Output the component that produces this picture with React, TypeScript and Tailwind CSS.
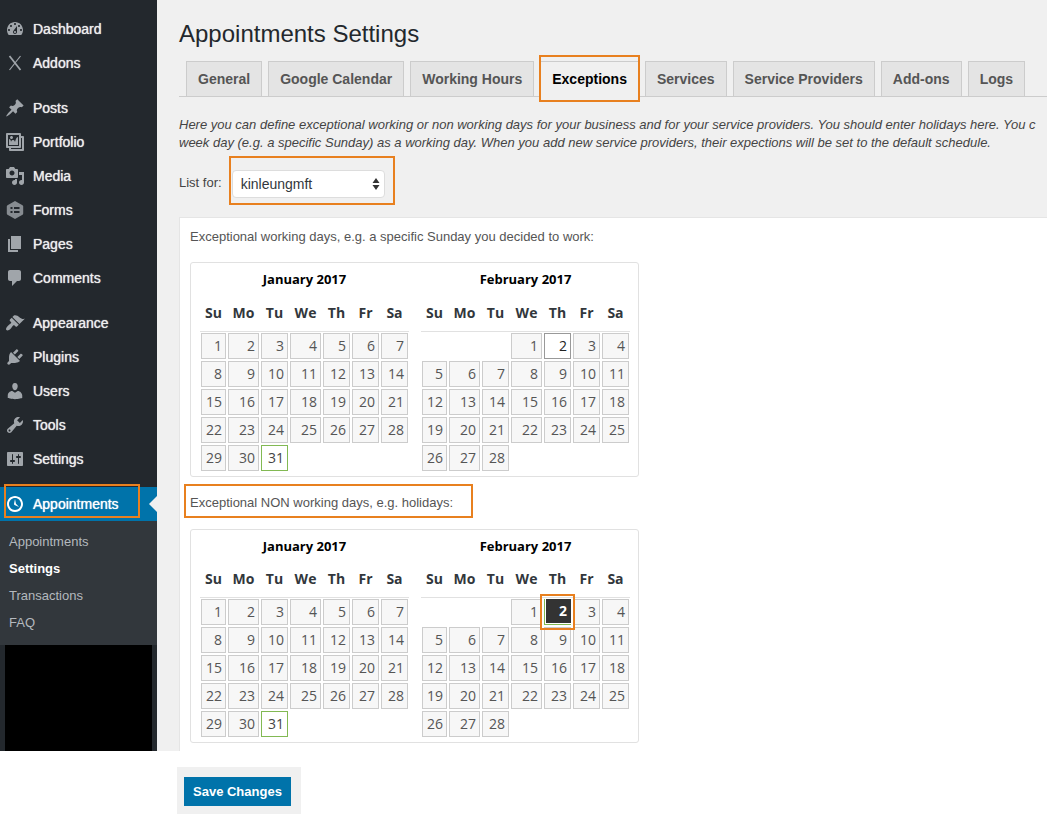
import { useState } from "react";
import clsx from "clsx";

type MenuItem = { label: string; icon: React.ReactNode };

function Icon({ d }: { d: string }) {
  return (
    <svg viewBox="0 0 20 20" className="size-5 shrink-0" fill="currentColor" aria-hidden="true">
      <path d={d} />
    </svg>
  );
}

const menuGroups: MenuItem[][] = [
  [
    {
      label: "Dashboard",
      icon: (
        <Icon d="M3.76 16h12.48c1.1-1.37 1.76-3.11 1.76-5 0-4.42-3.58-8-8-8s-8 3.58-8 8c0 1.89.66 3.63 1.76 5zM10 4c.55 0 1 .45 1 1s-.45 1-1 1-1-.45-1-1 .45-1 1-1zM6 6c.55 0 1 .45 1 1s-.45 1-1 1-1-.45-1-1 .45-1 1-1zm8 0c.55 0 1 .45 1 1s-.45 1-1 1-1-.45-1-1 .45-1 1-1zm-5.37 5.55L12 7v6c0 1.1-.9 2-2 2s-2-.9-2-2c0-.57.24-1.08.63-1.45zM4 10c.55 0 1 .45 1 1s-.45 1-1 1-1-.45-1-1 .45-1 1-1zm12 0c.55 0 1 .45 1 1s-.45 1-1 1-1-.45-1-1 .45-1 1-1zm-5 3c0-.55-.45-1-1-1s-1 .45-1 1 .45 1 1 1 1-.45 1-1z" />
      ),
    },
    {
      label: "Addons",
      icon: (
        <svg viewBox="0 0 20 20" className="size-5 shrink-0" fill="none" stroke="currentColor" aria-hidden="true">
          <path d="M4.500 3l11 14" strokeWidth="1.800" />
          <path d="M15.500 3L4.500 17" strokeWidth="1.200" />
        </svg>
      ),
    },
  ],
  [
    {
      label: "Posts",
      icon: (
        <Icon d="M10.44 3.02l1.82-1.82 6.36 6.35-1.83 1.82c-1.05-.68-2.48-.57-3.41.36l-.75.75c-.92.93-1.04 2.35-.35 3.41l-1.83 1.82-2.41-2.41-2.8 2.79c-.42.42-3.38 2.71-3.8 2.29s1.86-3.39 2.28-3.81l2.79-2.79L4.1 9.36l1.83-1.82c1.05.69 2.48.57 3.4-.36l.75-.75c.93-.92 1.05-2.35.36-3.41z" />
      ),
    },
    {
      label: "Portfolio",
      icon: (
        <Icon d="M16 4h1.96c.57 0 1.04.47 1.04 1.04v12.92c0 .57-.47 1.04-1.04 1.04H5.04C4.47 19 4 18.53 4 17.96V16H2.04C1.47 16 1 15.53 1 14.96V2.04C1 1.47 1.47 1 2.04 1h12.92c.57 0 1.04.47 1.04 1.04V4zM3 14h11V3H3v11zm5-8.5C8 4.67 7.33 4 6.5 4S5 4.67 5 5.5 5.67 7 6.500 7 8 6.33 8 5.5zm2 4.500s1-5 3-5v8H4V7c2 0 2 3 2 3s.33-2 2-2 2 2 2 2zm7 7V6h-1v8.960c0 .57-.47 1.04-1.04 1.04H6v1h11z" />
      ),
    },
    {
      label: "Media",
      icon: (
        <Icon d="M13 11V4c0-.55-.45-1-1-1h-1.670L9 1H5L3.67 3H2c-.55 0-1 .45-1 1v7c0 .55.45 1 1 1h10c.55 0 1-.45 1-1zM7 4.500c1.38 0 2.5 1.12 2.5 2.5S8.38 9.5 7 9.5 4.5 8.38 4.500 7 5.62 4.500 7 4.500zM14 6h5v10.5c0 1.38-1.12 2.5-2.5 2.5S14 17.88 14 16.5s1.12-2.5 2.5-2.5c.17 0 .34.02.5.05V9h-3V6zm-4 8.050V13h2v3.500c0 1.38-1.12 2.5-2.5 2.5S7 17.88 7 16.5 8.12 14 9.500 14c.17 0 .34.02.5.05z" />
      ),
    },
    {
      label: "Forms",
      icon: (
        <svg viewBox="0 0 20 20" className="size-5 shrink-0 opacity-80" aria-hidden="true">
          <path
            d="M10 1l7.500 4.200q.7.4.7 1.200v7.200q0 .8-.7 1.200L10 19l-7.500-4.200q-.7-.4-.7-1.200V6.400q0-.8.7-1.200z"
            fill="currentColor"
          />
          <path
            d="M5.500 7h2v2h-2zM9 7h5.500v2H9zM5.500 11h2v2h-2zM9 11h5.500v2H9z"
            fill="#23282d"
          />
        </svg>
      ),
    },
    { label: "Pages", icon: <Icon d="M6 15V2h10v13H6zm-1 1h8v2H3V5h2v11z" /> },
    {
      label: "Comments",
      icon: <Icon d="M5 2h9c1.1 0 2 .9 2 2v7c0 1.1-.9 2-2 2h-2l-5 5v-5H5c-1.1 0-2-.9-2-2V4c0-1.1.9-2 2-2z" />,
    },
  ],
  [
    {
      label: "Appearance",
      icon: (
        <Icon d="M14.48 11.06L7.41 3.99l1.5-1.5c.5-.56 2.3-.47 3.51.32 1.21.8 1.43 1.28 2.91 2.1 1.18.64 2.45 1.26 4.45.85zm-.71.71L6.7 4.7 4.93 6.47c-.39.39-.39 1.02 0 1.41l1.06 1.06c.39.39.39 1.03 0 1.42-.6.6-1.43 1.11-2.21 1.69-.35.26-.7.53-1.01.84C1.43 14.23.4 16.08 1.4 17.07c.99 1 2.84-.03 4.18-1.36.31-.31.58-.66.85-1.02.57-.78 1.08-1.61 1.69-2.21.39-.39 1.02-.39 1.41 0l1.06 1.06c.39.39 1.02.39 1.41 0z" />
      ),
    },
    {
      label: "Plugins",
      icon: (
        <Icon d="M13.11 4.36L9.87 7.6 8 5.73l3.24-3.24c.35-.34 1.05-.2 1.56.32.52.51.66 1.21.31 1.55zm-8 1.77l.91-1.12 9.01 9.01-1.19.84c-.71.71-2.63 1.16-3.82 1.16H6.14L4.9 17.26c-.59.59-1.54.59-2.12 0-.59-.58-.59-1.53 0-2.12l1.24-1.24v-3.88c0-1.13.4-3.19 1.09-3.89zm7.26 3.97l3.24-3.24c.34-.35 1.04-.21 1.55.31.52.51.66 1.21.31 1.55l-3.24 3.25z" />
      ),
    },
    {
      label: "Users",
      icon: (
        <Icon d="M10 9.25c-2.27 0-2.73-3.44-2.73-3.44C7 4.02 7.82 2 9.97 2c2.16 0 2.98 2.02 2.71 3.81 0 0-.41 3.44-2.68 3.44zm0 2.57L12.72 10c2.39 0 4.52 2.33 4.52 4.53v2.49s-3.65 1.13-7.24 1.13c-3.65 0-7.24-1.13-7.24-1.13v-2.49c0-2.25 1.94-4.48 4.47-4.48z" />
      ),
    },
    {
      label: "Tools",
      icon: (
        <Icon d="M16.68 9.77c-1.34 1.34-3.3 1.67-4.95.99l-5.41 6.52c-.99.99-2.59.99-3.58 0s-.99-2.59 0-3.57l6.52-5.42c-.68-1.65-.35-3.61.99-4.95 1.28-1.28 3.12-1.62 4.72-1.06l-2.89 2.89 2.82 2.82 2.86-2.87c.53 1.58.18 3.39-1.08 4.65zM3.81 16.21c.4.39 1.04.39 1.43 0 .4-.4.4-1.04 0-1.43-.39-.4-1.03-.4-1.43 0-.39.39-.39 1.03 0 1.43z" />
      ),
    },
    {
      label: "Settings",
      icon: (
        <Icon d="M18 16V4c0-.55-.45-1-1-1H3c-.55 0-1 .45-1 1v12c0 .55.45 1 1 1h14c.55 0 1-.45 1-1zM8 11h1c.55 0 1 .45 1 1s-.45 1-1 1H8v1.5c0 .28-.22.5-.5.5s-.5-.22-.5-.5V13H6c-.55 0-1-.45-1-1s.45-1 1-1h1V5.5c0-.28.22-.5.5-.5s.5.22.5.5V11zm5-2h-1c-.55 0-1-.45-1-1s.45-1 1-1h1V5.5c0-.28.22-.5.5-.5s.5.22.5.5V7h1c.55 0 1 .45 1 1s-.45 1-1 1h-1v5.5c0 .28-.22.5-.5.5s-.5-.22-.5-.5V9z" />
      ),
    },
  ],
];

const clockPath =
  "M10 2c4.42 0 8 3.58 8 8s-3.58 8-8 8-8-3.58-8-8 3.58-8 8-8zm0 14c3.31 0 6-2.69 6-6s-2.69-6-6-6-6 2.69-6 6 2.69 6 6 6zm-.71-5.29c.07.05.14.1.23.15l-.02.02L14 13l-3.03-3.19L10 5l-.97 4.81h.01c0 .02-.01.05-.02.09S9 9.97 9 10c0 .28.1.52.29.71z";

const submenu = ["Appointments", "Settings", "Transactions", "FAQ"];

const tabs = [
  "General",
  "Google Calendar",
  "Working Hours",
  "Exceptions",
  "Services",
  "Service Providers",
  "Add-ons",
  "Logs",
];

const weekdays = ["Su", "Mo", "Tu", "We", "Th", "Fr", "Sa"];

// Orange annotation frame, laid over whatever it is placed in
function Highlight({ className }: { className: string }) {
  return <span className={clsx("pointer-events-none absolute z-10 border-2 border-[#e8801f]", className)} />;
}

function Sidebar() {
  return (
    <nav className="w-[157px] shrink-0 bg-[#23282d] pt-3 text-sm text-[#eee]">
      {menuGroups.map((group, i) => (
        <ul key={i} className="mb-[11px]">
          {group.map((item) => (
            <li key={item.label}>
              <a href="#" className="flex h-[34px] items-center gap-2 pl-[5px] text-[#a0a5aa]">
                {item.icon}
                <span className="text-[#eee] [text-shadow:0_0_1px_currentColor]">{item.label}</span>
              </a>
            </li>
          ))}
        </ul>
      ))}

      <div className="relative bg-[#0073aa]">
        <a href="#" className="flex h-[34px] items-center gap-2 pl-[5px] text-white">
          <Icon d={clockPath} />
          <span className="[text-shadow:0_0_1px_currentColor]">Appointments</span>
        </a>
        <span className="absolute top-[9px] right-0 border-y-8 border-r-8 border-y-transparent border-r-[#f0f0f0]" />
        <Highlight className="-top-[3px] right-[17px] bottom-[3px] left-1" />
      </div>

      <ul className="bg-[#32373c] py-2 text-[13px]">
        {submenu.map((label) => (
          <li key={label}>
            <a
              href="#"
              className={clsx(
                "flex h-[27px] items-center pl-[9px]",
                label === "Settings" ? "font-bold text-white" : "text-[#b4b9be]"
              )}
            >
              {label}
            </a>
          </li>
        ))}
      </ul>
      <div className="mx-[5px] h-[106px] bg-black" />
    </nav>
  );
}

function Tabs() {
  return (
    <div className="ml-[22px] flex gap-[6px] border-b border-[#ccc] pl-[7px]">
      {tabs.map((tab) => {
        const active = tab === "Exceptions";
        return (
          <a
            key={tab}
            href="#"
            className={clsx(
              "relative -mb-px h-9 border border-[#ccc] px-[11px] text-sm leading-[34px] font-bold whitespace-nowrap",
              active ? "border-b-[#f0f0f0] bg-[#f0f0f0] text-black" : "bg-[#e4e4e4] text-[#555]"
            )}
          >
            {tab}
            {active && <Highlight className="-inset-x-[2px] -top-[7px] -bottom-[6px]" />}
          </a>
        );
      })}
    </div>
  );
}

type MonthProps = {
  name: string;
  offset: number;
  days: number;
  today?: number;
  hovered?: number;
  selected?: number;
};

function Month({ name, offset, days, today, hovered, selected }: MonthProps) {
  const weeks = Array.from({ length: 5 }, (_, w) =>
    Array.from({ length: 7 }, (_, d) => w * 7 + d - offset + 1)
  );

  return (
    <table className="w-[209px] table-fixed border-collapse">
      <caption className="h-[31px] pt-[5px] text-[13px] leading-5 font-bold text-black">{name}</caption>
      <colgroup>
        <col className="w-[27px]" />
        <col className="w-[33px]" />
        <col className="w-[29px]" />
        <col className="w-[33px]" />
        <col className="w-[29px]" />
        <col className="w-[29px]" />
        <col className="w-[29px]" />
      </colgroup>
      <thead>
        <tr>
          {weekdays.map((day) => (
            <th key={day} scope="col" className="h-9 p-0 text-sm font-bold text-[#32373c]">
              {day}
            </th>
          ))}
        </tr>
      </thead>
      <tbody className="border-t border-[#e1e1e1]">
        {weeks.map((week, i) => (
          <tr key={i}>
            {week.map((n) => (
              <td key={n} className="relative h-7 p-px">
                {n > 0 && n <= days && n !== selected && (
                  <button
                    type="button"
                    className={clsx(
                      "block h-[26px] w-full border pr-[3px] text-right text-sm leading-6",
                      n === today
                        ? "border-[#82b953] bg-white text-[#444]"
                        : n === hovered
                          ? "border-[#999] bg-white text-[#222]"
                          : "border-[#ccc] bg-[#f7f7f7] text-[#555]"
                    )}
                  >
                    {n}
                  </button>
                )}
                {n === selected && (
                  <>
                    <span className="block h-[26px] border-b border-l border-[#82b953] pb-px pl-px">
                      <button
                        type="button"
                        aria-pressed="true"
                        className="block size-full bg-[#333] pr-1 text-right text-sm leading-6 font-bold text-white"
                      >
                        {n}
                      </button>
                    </span>
                    <Highlight className="-inset-x-[3px] -inset-y-1" />
                  </>
                )}
              </td>
            ))}
          </tr>
        ))}
      </tbody>
    </table>
  );
}

function Calendar({ hovered, selected }: { hovered?: number; selected?: number }) {
  return (
    <div className="flex w-fit gap-3 rounded-[3px] border border-[#e1e1e1] pt-px pr-2 pb-1 pl-[9px] font-['Open_Sans',sans-serif]">
      <Month name="January 2017" offset={0} days={31} today={31} />
      <Month name="February 2017" offset={3} days={28} hovered={hovered} selected={selected} />
    </div>
  );
}

export default function App() {
  const [provider, setProvider] = useState("kinleungmft");

  return (
    <div className="min-h-screen bg-white font-['Liberation_Sans',Arial,sans-serif] text-[13px] leading-[18px] text-[#444]">
      <div className="flex">
        <Sidebar />

        <main className="flex min-w-0 flex-1 flex-col overflow-hidden bg-[#f0f0f0]">
          <h1 className="mt-5 mb-[13px] ml-[22px] text-2xl leading-7 text-[#23282d]">Appointments Settings</h1>
          <Tabs />

          <p className="mt-[19px] ml-[22px] whitespace-nowrap italic">
            Here you can define exceptional working or non working days for your business and for your service
            providers. You should enter holidays here. You c
            <br />
            week day (e.g. a specific Sunday) as a working day. When you add new service providers, their expections
            will be set to the default schedule.
          </p>

          <div className="mt-1 ml-[22px] flex items-center gap-[7px]">
            <label htmlFor="provider" className="pt-1">
              List for:
            </label>
            <div className="relative px-[3px] pt-[14px] pb-[7px]">
              <select
                id="provider"
                value={provider}
                onChange={(e) => setProvider(e.target.value)}
                className="block h-7 w-[153px] appearance-none rounded-[4px] border border-[#ddd] bg-white pl-2 text-sm text-[#32373c]"
              >
                <option value="kinleungmft">kinleungmft</option>
              </select>
              <svg
                viewBox="0 0 8 12"
                className="pointer-events-none absolute right-2 bottom-[15px] h-3 w-2"
                fill="#333"
                aria-hidden="true"
              >
                <path d="M4 0l3.500 5h-7zM4 12L.5 7h7z" />
              </svg>
              <Highlight className="inset-y-0 -right-[7px] left-0" />
            </div>
          </div>

          <section className="mt-3 ml-[22px] flex-1 border-t border-l border-[#e5e5e5] bg-white pb-[6px] pl-[10px]">
            <p className="pt-[10px] pb-4 text-[#555]">
              Exceptional working days, e.g. a specific Sunday you decided to work:
            </p>
            <Calendar hovered={2} />
            <p className="relative mt-[7px] mb-[11px] flex h-[34px] w-fit items-center pt-1 text-[#555]">
              Exceptional NON working days, e.g. holidays:
              <Highlight className="inset-y-0 -right-5 -left-[6px]" />
            </p>
            <Calendar selected={2} />
          </section>
        </main>
      </div>

      <div className="mt-4 ml-[177px] w-fit bg-[#f0f0f0] pt-[10px] pr-[10px] pb-2 pl-[7px]">
        <button type="button" className="block h-[29px] bg-[#0073aa] px-[9px] text-[13px] font-bold text-white">
          Save Changes
        </button>
      </div>
    </div>
  );
}
